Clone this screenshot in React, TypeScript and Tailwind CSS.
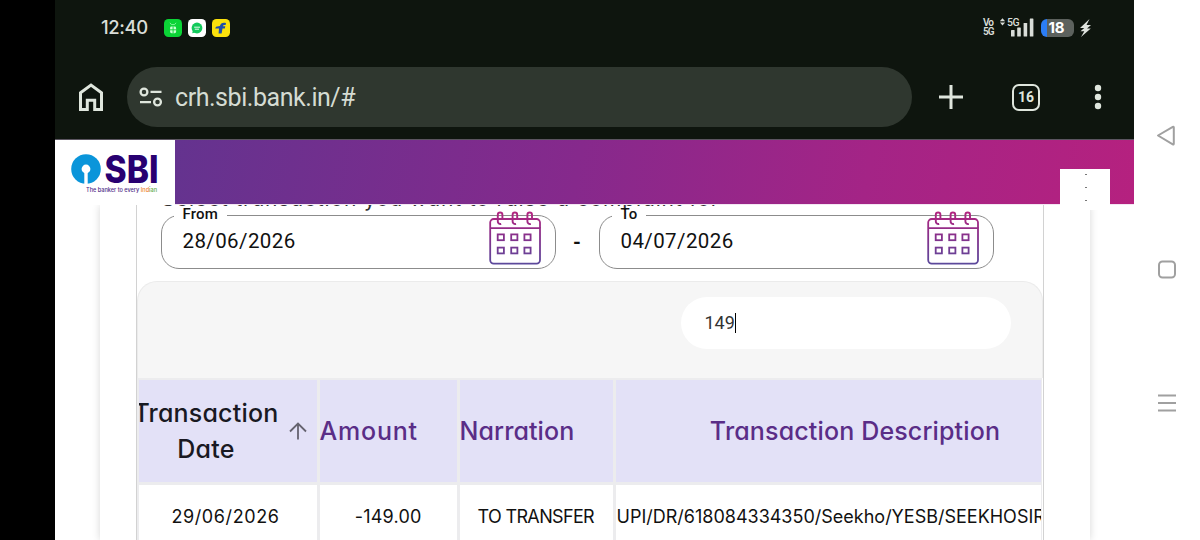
import React from 'react';

const CalendarIcon = ({ id }: { id: string }) => (
  <svg width="52" height="54" viewBox="0 0 52 54" fill="none">
    <defs>
      <linearGradient id={id} x1="0" y1="0" x2="0" y2="54" gradientUnits="userSpaceOnUse">
        <stop offset="0" stopColor="#b3257f" />
        <stop offset="0.5" stopColor="#84318c" />
        <stop offset="1" stopColor="#5a4a9c" />
      </linearGradient>
    </defs>
    <g stroke={`url(#${id})`} strokeWidth="1.8">
      <rect x="1.2" y="8" width="49.8" height="44.6" rx="3.5" />
      <path d="M1.2 17.2h49.8v0.01" />
      {/* Rings */}
      {[8.8, 23.6, 38.4].map((x) => (
        <path key={x} d={`M${x + 4.6} 8V3.8a2.3 2.3 0 0 0-4.6 0v6.4a2.6 2.6 0 0 0 3.4 2.6`} strokeWidth="1.9" />
      ))}
      {/* Days */}
      {[23.4, 36.6].map((y) =>
        [8.7, 22.2, 35.4].map((x) => <rect key={`${x}-${y}`} x={x} y={y} width="6.2" height="5.8" />)
      )}
    </g>
  </svg>
);

const DateField = ({ id, label, value, notch }: { id: string; label: string; value: string; notch: string }) => (
  <div className="relative flex h-[54px] w-[395px] items-center justify-between rounded-[18px] border-[1.5px] border-[#8c8c8c] pl-[21px] pr-[14px] font-[Roboto,sans-serif]">
    <span className={`absolute -top-[3px] left-[12px] h-1 bg-white pl-[9px] text-[15px] leading-[2px] font-medium tracking-[0.2px] text-[#111] ${notch}`}>
      {label}
    </span>
    <span className="-mt-[2px] text-[20.5px] tracking-[0.4px] text-[#111]">{value}</span>
    <div className="-mt-[9px]">
      <CalendarIcon id={id} />
    </div>
  </div>
);

const StatusBar = () => (
  <div className="flex h-[55px] items-center justify-between pl-[46px] pr-[42px] text-[#d9ddd8]">
    <div className="flex items-center">
      <span className="w-[63px] font-[Inter,sans-serif] text-[18.5px] font-medium tracking-[-0.4px]">12:40</span>
      <div className="flex gap-[6px]">
        <svg width="18" height="18" viewBox="0 0 18 18">
          <rect width="18" height="18" rx="4.5" fill="#0bd436" />
          <path d="M6 3.8l1.4 1.8h3.2L12 3.8" stroke="#8ff7a4" strokeWidth="0.9" fill="none" />
          <rect x="6.1" y="7.6" width="6" height="6.6" rx="1.4" fill="#c9ffd2" />
          <path d="M9.1 7.4v7M6 10.8h6.2" stroke="#0bd436" strokeWidth="0.9" />
        </svg>
        <svg width="18" height="18" viewBox="0 0 18 18">
          <rect width="18" height="18" rx="4.5" fill="#fff" />
          <circle cx="9" cy="9" r="5.4" fill="#12c95b" />
          <path d="M4.2 14.2l1-4 3 3z" fill="#12c95b" />
          <path d="M6.2 8.2h5.8M6.8 10.2h4.2" stroke="#fff" strokeWidth="0.9" />
        </svg>
        <svg width="18" height="18" viewBox="0 0 18 18">
          <rect width="18" height="18" rx="4.5" fill="#fbe10c" />
          <path d="M14 4c-3-1-5.6.2-6.1 3L4 7.800 3.200 9.400h3.800L6.600 14.500h3l.9-5.100h2.300l.5-2.200H10.900c.2-1.100 1.200-1.400 2.700-1.200z" fill="#1e4dab" />
        </svg>
      </div>
    </div>
    <div className="flex items-center">
      <div className="flex w-[17px] flex-col items-start font-[Roboto,sans-serif] text-[10px] leading-[8.5px] font-semibold tracking-[-1px]">
        <span>Vo</span>
        <span>5G</span>
      </div>
      <div className="relative mr-[7px] h-[19px] w-[34px]">
        <svg width="34" height="19" viewBox="0 0 34 19" fill="#d9ddd8">
          <path d="M2.500 0.200l2.600 3h-5.200zM2.500 7.400l2.600-3h-5.200z" />
          <rect x="11" y="12" width="3.600" height="6.500" rx="0.6" />
          <rect x="17.200" y="9.500" width="3.600" height="9" rx="0.6" />
          <rect x="23.600" y="5" width="3.600" height="13.500" rx="0.6" />
          <rect x="29.800" y="0.500" width="3.600" height="18" rx="0.6" />
        </svg>
        <span className="absolute top-0 left-[7px] font-[Roboto,sans-serif] text-[10.5px] leading-[9px] font-medium tracking-[-0.5px]">5G</span>
      </div>
      <div className="flex h-[18px] w-[33px] items-center justify-center rounded-[6px] bg-[linear-gradient(90deg,#2b7df5_0_6px,#5c615d_6px)] pt-px pr-[2px] font-[Inter,sans-serif] text-[15px] leading-[18px] font-bold text-white">
        18
      </div>
      <svg className="ml-[5px]" width="13" height="18" viewBox="0 0 13 18" fill="#dfe3de">
        <path d="M10.500 0L1 9h4.300L1.500 12.200h3.800L2 18l9.800-8.600H8L12 6H7.500z" />
      </svg>
    </div>
  </div>
);

const BrowserBar = () => (
  <div className="flex h-[84px] items-center pl-[23px] text-[#dfe6dd]">
    <svg width="26" height="28" viewBox="0 0 26 28" fill="none" stroke="currentColor" strokeWidth="3">
      <path d="M2.500 26.500V9.800L13 2l10.500 7.800v16.700h-6.800v-9.300H9.300v9.300z" />
    </svg>
    <div className="ml-[23px] flex h-[60px] w-[785px] items-center rounded-full bg-[#2f372f] pl-3">
      <svg width="24" height="20" viewBox="0 0 24 20" fill="none" stroke="currentColor" strokeWidth="2.300">
        <circle cx="5" cy="5" r="3.400" />
        <path d="M11.500 4.800H22.500M1 15.200h11" />
        <circle cx="18.500" cy="15" r="3.400" />
      </svg>
      <span className="mt-px ml-3 font-[Roboto,sans-serif] text-[25px] tracking-[-0.45px] text-[#d5dcd3]">crh.sbi.bank.in/#</span>
    </div>
    <svg className="ml-[27px]" width="24" height="24" viewBox="0 0 24 24" stroke="currentColor" strokeWidth="3">
      <path d="M12 0v24M0 12h24" />
    </svg>
    <div className="ml-[49px] flex h-[27px] w-[28px] items-center justify-center rounded-[7px] border-[2.500px] border-current font-[Roboto,sans-serif] text-[14px] font-bold">
      16
    </div>
    <svg className="ml-[54px]" width="8" height="26" viewBox="0 0 8 26" fill="currentColor">
      <circle cx="4" cy="4" r="3.200" />
      <circle cx="4" cy="13" r="3.200" />
      <circle cx="4" cy="22" r="3.200" />
    </svg>
  </div>
);

const Logo = () => (
  <svg width="120" height="66" viewBox="0 0 120 66">
    <circle cx="31" cy="29" r="14.800" fill="#0a95da" />
    <circle cx="31" cy="29" r="4.400" fill="#fff" />
    <rect x="29.300" y="31" width="3.400" height="13.500" fill="#fff" />
    <text x="49.500" y="43" textLength="54" lengthAdjust="spacingAndGlyphs" fontFamily="Inter, sans-serif" fontWeight="800" fontSize="38.500" fill="#280071">
      SBI
    </text>
    <text x="31" y="52.200" fontFamily="Inter, sans-serif" fontWeight="500" fontSize="6" textLength="71" lengthAdjust="spacingAndGlyphs" fill="#4d2a86">
      The banker to every <tspan fill="#ee7f2d">Ind</tspan><tspan fill="#62a744">ian</tspan>
    </text>
  </svg>
);

const SiteHeader = () => (
  <header className="relative z-10 flex h-[66px] border-t border-[#5b5560] bg-[#f3e6f3]">
    <div className="w-[120px] bg-white">
      <Logo />
    </div>
    <div className="h-[64px] flex-1 bg-[linear-gradient(100deg,#64338f,#86298c_42%,#a42486_72%,#b5217f)]"></div>
    {/* Menu button hangs over the edge of the bar */}
    <div className="absolute top-[29px] right-[24px] flex h-[41px] w-[50px] flex-col items-center gap-3 bg-white pt-[5px] pl-[2px]">
      <span className="h-px w-[2px] bg-[#777]"></span>
      <span className="h-px w-[2px] bg-[#777]"></span>
      <span className="h-px w-[2px] bg-[#777]"></span>
    </div>
  </header>
);

const headCell = 'flex items-center bg-[#e3e1f7] text-[25px] font-medium text-[#5a2d87]';
const bodyCell = 'flex items-center bg-white text-[18px] text-[#111]';
const cols = 'grid grid-cols-[178px_137px_153px_425px] gap-x-[3px]';

const TransactionTable = () => (
  <div className="flex w-[905px] flex-col gap-y-[3px] overflow-hidden bg-[#ececee] pt-[2px] pl-[2px] font-[Inter,sans-serif] [font-feature-settings:'cv11']">
    <div className={`${cols} h-[102px]`}>
      <div className={`${headCell} justify-end overflow-hidden pr-[10px] text-[#191922]`}>
        <span className="mr-[10px] shrink-0 pb-px text-center leading-9 tracking-[0.2px] text-[#191922]">
          Transaction
          <br />
          Date
        </span>
        <svg className="shrink-0" width="18" height="18" viewBox="0 0 18 18" fill="none" stroke="#65636f" strokeWidth="1.800">
          <path d="M9 17.500V1.500M1 9.500l8-8 8 8" />
        </svg>
      </div>
      <div className={`${headCell} pt-[2px] tracking-[0.8px]`}>Amount</div>
      <div className={`${headCell} pt-[2px] tracking-[0.1px]`}>Narration</div>
      <div className={`${headCell} justify-center pt-[2px] pl-[54px] tracking-[0.15px] whitespace-nowrap`}>Transaction Description</div>
    </div>
    <div className={`${cols} h-[62px]`}>
      <div className={`${bodyCell} justify-center pr-[4px] tracking-[0.6px]`}>29/06/2026</div>
      <div className={`${bodyCell} justify-end pr-[35px] tracking-[0.2px]`}>-149.00</div>
      <div className={`${bodyCell} pl-[18px] tracking-[-0.65px]`}>TO TRANSFER</div>
      <div className={`${bodyCell} overflow-hidden pl-px whitespace-nowrap`}>UPI/DR/618084334350/Seekho/YESB/SEEKHOSIR</div>
    </div>
  </div>
);

const ComplaintPage = () => (
  <main className="flex h-[335px] justify-center overflow-hidden bg-white pr-px pl-px">
    <div className="flex w-[990px] pl-[36px] shadow-[0_0_8px_rgba(0,0,0,0.16)]">
      <div className="w-[908px] border-x-[1.500px] border-[#d2d2d2]">
        <p className="-mt-[21px] h-[31px] pl-[25px] font-[Inter,sans-serif] text-[21px] leading-[30px] tracking-[0.85px] whitespace-nowrap text-[#333] [font-feature-settings:'cv11']">
          Select transaction you want to raise a complaint for
        </p>
        <div className="flex items-center pl-6">
          <DateField id="from-date" label="From" value="28/06/2026" notch="w-[53px]" />
          <span className="w-[43px] text-center font-[Roboto,sans-serif] text-[20px] font-bold text-[#111]">-</span>
          <DateField id="to-date" label="To" value="04/07/2026" notch="w-[34px]" />
        </div>
        <div className="mt-[12px] flex h-[97px] justify-end rounded-t-[20px] border border-b-0 border-[#ebebeb] bg-[#f6f6f6] pt-[15px] pr-[31px]">
          <div className="flex h-[52px] w-[330px] items-center rounded-full bg-white pb-px pl-6 font-[Roboto,sans-serif] text-[18px] text-[#333]">
            149
            <span className="h-5 w-[1.500px] bg-black"></span>
          </div>
        </div>
        <TransactionTable />
      </div>
    </div>
  </main>
);

// Phone navigation keys, shown sideways
const NavKeys = () => (
  <div className="flex w-[66px] flex-col items-center bg-white pt-[125px]">
    <svg width="20" height="290" viewBox="0 0 20 290" fill="none" stroke="#a0a0a0" strokeWidth="2">
      <path d="M1 10.500L15.800 1.800q1-.5 1 .8v16q0 1.300-1 .8z" strokeLinejoin="round" />
      <rect x="2" y="136.500" width="16" height="16" rx="3.500" />
      <path d="M1 270.500h18M1 278h18M1 285.500h18" strokeWidth="1.800" />
    </svg>
  </div>
);

const App = () => {
  return (
    <div className="flex h-[540px] w-[1200px] overflow-hidden bg-white">
      <div className="w-[55px] bg-black"></div>
      <div className="w-[1079px] bg-[#0e150e]">
        <StatusBar />
        <BrowserBar />
        <SiteHeader />
        <ComplaintPage />
      </div>
      <NavKeys />
    </div>
  );
};

export default App;
